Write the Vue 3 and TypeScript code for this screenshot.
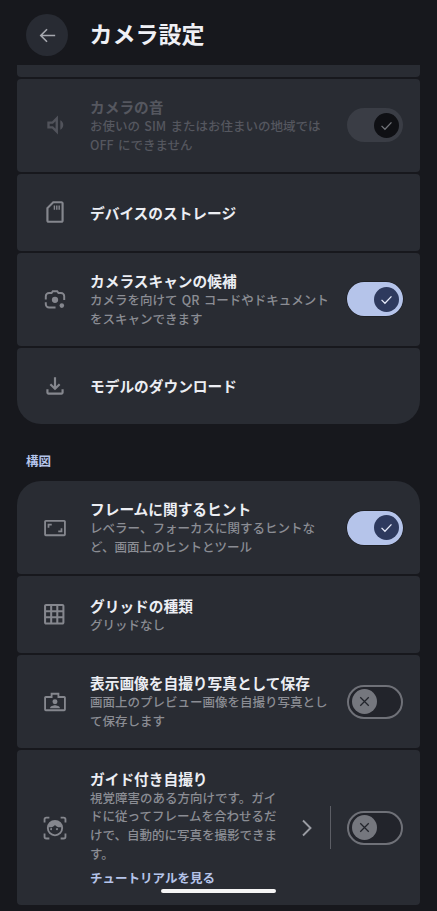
<script setup lang="ts">
interface Row {
  id: string
  title: string
  lines?: string[]
  icon: string
  toggle?: 'on' | 'off' | 'locked'
  extra?: string
  guided?: boolean
  disabled?: boolean
}

const firstGroup: Row[] = [
  { id: 'sound', title: 'カメラの音', lines: ['お使いの SIM またはお住まいの地域では', 'OFF にできません'], icon: 'sound', toggle: 'locked', disabled: true },
  { id: 'storage', title: 'デバイスのストレージ', icon: 'sd' },
  { id: 'scan', title: 'カメラスキャンの候補', lines: ['カメラを向けて QR コードやドキュメント', 'をスキャンできます'], icon: 'lens', toggle: 'on' },
  { id: 'model', title: 'モデルのダウンロード', icon: 'download' },
]

const secondGroup: Row[] = [
  { id: 'hint', title: 'フレームに関するヒント', lines: ['レベラー、フォーカスに関するヒントな', 'ど、画面上のヒントとツール'], icon: 'frame', toggle: 'on' },
  { id: 'grid', title: 'グリッドの種類', lines: ['グリッドなし'], icon: 'grid' },
  { id: 'selfie', title: '表示画像を自撮り写真として保存', lines: ['画面上のプレビュー画像を自撮り写真とし', 'て保存します'], icon: 'badge', toggle: 'off' },
  { id: 'guide', title: 'ガイド付き自撮り', lines: ['視覚障害のある方向けです。ガイ', 'ドに従ってフレームを合わせるだ', 'けで、自動的に写真を撮影できま', 'す。'], icon: 'face', toggle: 'off', extra: 'チュートリアルを見る', guided: true },
]

const groups = [
  { id: 'a', label: '', rows: firstGroup },
  { id: 'b', label: '構図', rows: secondGroup },
]

const viewBoxes: Record<string, string> = {
  sound: '0.5 1 22 22',
  grid: '0 0 25.500 25.500',
}
function viewBoxFor(icon: string): string {
  return viewBoxes[icon] ?? '0 0 24 24'
}
</script>

<template>
  <div class="screen">
    <header class="top">
      <button class="back" aria-label="戻る">
        <svg viewBox="0 0 24 24" class="back-icon"><path d="M20 12H5M11.500 5.500 5 12l6.500 6.500" /></svg>
      </button>
      <h1>カメラ設定</h1>
    </header>

    <main class="scroll">
      <div class="stub"></div>
      <template v-for="g in groups" :key="g.id">
        <h2 v-if="g.label" class="section">{{ g.label }}</h2>
        <section class="group">
          <article
            v-for="r in g.rows"
            :key="r.id"
            class="row"
            :class="['row-' + r.id, { disabled: r.disabled }]"
          >
            <svg class="icon" :viewBox="viewBoxFor(r.icon)">
              <path v-if="r.icon === 'sound'" d="M16 7.970v8.050c1.480-.73 2.500-2.250 2.500-4.020A4.500 4.500 0 0 0 16 7.970zM5 9v6h4l5 5V4L9 9H5zm7-.17v6.340L9.830 13H7v-2h2.830L12 8.830z" />
              <path v-else-if="r.icon === 'sd'" d="M18 2h-8L4 8v12c0 1.100.9 2 2 2h12c1.100 0 2-.9 2-2V4c0-1.100-.9-2-2-2zm0 18H6V8.830L10.830 4H18v16zM10.800 6h1.300v4h-1.300zM13 6h1.300v4H13zM15.200 6h1.300v4h-1.300z" />
              <template v-else-if="r.icon === 'lens'">
                <path class="line" d="M12.500 19.800H6.500a3 3 0 0 1-3-3V15M3.500 12.500V9.500a3 3 0 0 1 3-3h2.300l1.200-1.700h4l1.200 1.700h2.300a3 3 0 0 1 3 3V13" />
                <circle cx="12" cy="12.800" r="2.900" />
                <circle cx="18.300" cy="18.100" r="2.100" />
              </template>
              <path v-else-if="r.icon === 'download'" d="M18 15v3H6v-3H4v3c0 1.100.9 2 2 2h12c1.100 0 2-.9 2-2v-3h-2zm-1-4-1.410-1.410L13 12.170V4h-2v8.170L8.410 9.590 7 11l5 5 5-5z" />
              <path v-else-if="r.icon === 'frame'" d="M20.500 4.500h-17C2.700 4.500 2 5.200 2 6v12c0 .8.7 1.500 1.500 1.500h17c.8 0 1.500-.7 1.500-1.500V6c0-.8-.7-1.500-1.500-1.500zm-.2 13.300H3.700V6.200h16.600v11.600zM9 8H5.200v3.800h1.600V9.600H9V8zM18.800 12.200h-1.600v2.200H15V16h3.800v-3.800z" />
              <path v-else-if="r.icon === 'grid'" d="M20 2H4c-1.100 0-2 .9-2 2v16c0 1.100.9 2 2 2h16c1.100 0 2-.9 2-2V4c0-1.100-.9-2-2-2zM8 20H4v-4h4v4zm0-6H4v-4h4v4zm0-6H4V4h4v4zm6 12h-4v-4h4v4zm0-6h-4v-4h4v4zm0-6h-4V4h4v4zm6 12h-4v-4h4v4zm0-6h-4v-4h4v4zm0-6h-4V4h4v4z" />
              <path v-else-if="r.icon === 'badge'" d="M8 3.500h8V6.500h4.500c.8 0 1.500.7 1.500 1.500v11c0 .8-.7 1.500-1.500 1.500h-17c-.8 0-1.500-.7-1.500-1.500V8c0-.8.7-1.500 1.500-1.500H8V3.500zm1.700 1.700v3H3.700v10.600h16.600V8.200h-6V5.200H9.700zM12 9.500a2.300 2.300 0 1 1 0 4.600 2.300 2.300 0 0 1 0-4.600zM7.500 17.500c0-1.500 3-2.400 4.500-2.400s4.500.9 4.500 2.400v.3h-9v-.3z" />
              <template v-else-if="r.icon === 'face'">
                <path d="M1.500 7V4a2.500 2.500 0 0 1 2.500-2.500h2.800v1.700H4c-.5 0-.8.3-.8.8v3H1.500zM17.200 1.500H20A2.500 2.500 0 0 1 22.500 4v3h-1.700V4c0-.5-.3-.8-.8-.8h-2.800V1.500zM1.500 17h1.700v3c0 .5.3.8.8.8h2.800v1.700H4A2.500 2.500 0 0 1 1.500 20v-3zM20.800 17h1.700v3a2.500 2.500 0 0 1-2.500 2.500h-2.800v-1.700H20c.5 0 .8-.3.8-.8v-3z" />
                <path fill-rule="evenodd" d="M12 4.500a7.500 7.500 0 1 1 0 15 7.500 7.500 0 0 1 0-15zM6.300 11.200c2.300.4 4.300-.2 5.700-2 1.400 1.800 3.400 2.400 5.700 2v1a5.700 5.700 0 0 1-11.400 0v-1zM9.300 13a.9.9 0 1 0 0 .01zM14.700 13a.9.9 0 1 0 0 .01z" />
              </template>
            </svg>

            <div class="text" :class="{ narrow: r.guided }">
              <div class="title">{{ r.title }}</div>
              <div v-for="l in r.lines" :key="l" class="sub">{{ l }}</div>
              <div v-if="r.extra" class="link">{{ r.extra }}</div>
            </div>

            <div class="end">
              <template v-if="r.guided">
                <svg class="chevron" viewBox="0 0 24 24"><path d="M8 4.500 15.500 12 8 19.500" /></svg>
                <span class="divider"></span>
              </template>
              <div v-if="r.toggle" class="toggle" :class="r.toggle">
                <span class="thumb">
                  <svg v-if="r.toggle === 'off'" viewBox="0 0 24 24"><path d="M6 6l12 12M18 6 6 18" /></svg>
                  <svg v-else viewBox="0 0 24 24"><path d="M5 12.500l4.800 4.800L19 7.500" /></svg>
                </span>
              </div>
            </div>
          </article>
        </section>
      </template>
    </main>

    <div class="home"></div>
  </div>
</template>

<style scoped>
.screen {
  position: relative;
  width: 437px;
  height: 911px;
  overflow: hidden;
  background: #17181d;
  font-family: "Noto Sans CJK JP", "Noto Sans", sans-serif;
  color: #eceef3;
}
.top {
  height: 65px;
  box-sizing: border-box;
  display: flex;
  align-items: center;
  padding: 5px 0 0 26px;
  gap: 21.500px;
}
.back {
  width: 42px;
  height: 42px;
  padding: 0;
  border: 0;
  border-radius: 50%;
  background: #282b33;
  display: flex;
  align-items: center;
  justify-content: center;
}
.back-icon {
  width: 23px;
  height: 23px;
  fill: none;
  stroke: #a6a8af;
  stroke-width: 1.700;
}
h1 {
  margin: 0 0 4px;
  font-size: 23px;
  line-height: 32px;
  font-weight: 700;
  color: #eff0f5;
}
.scroll {
  padding: 0 17px;
}
.stub {
  height: 12px;
  margin-bottom: 2px;
  background: #292c33;
  border-radius: 0 0 4px 4px;
}
.section {
  margin: 0;
  height: 57px;
  box-sizing: border-box;
  padding: 28px 0 0 9px;
  font-size: 12.500px;
  line-height: 18px;
  font-weight: 700;
  color: #b5c4ea;
}
.group {
  display: flex;
  flex-direction: column;
  gap: 2px;
}
.row {
  display: flex;
  align-items: center;
  box-sizing: border-box;
  min-height: 77px;
  padding: 0 17px 0 25px;
  background: #292c33;
  border-radius: 4px;
}
.row-sound {
  min-height: 92.500px;
}
.row-scan, .row-hint, .row-selfie {
  min-height: 93px;
}
.row-model {
  min-height: 76.500px;
  border-radius: 4px 4px 24px 24px;
}
.row-guide {
  min-height: 155px;
}
.row-hint {
  border-radius: 24px 24px 4px 4px;
}
.icon {
  flex: none;
  width: 26px;
  height: 26px;
  margin-right: 22px;
  fill: #85878e;
}
.icon .line {
  fill: none;
  stroke: #85878e;
  stroke-width: 1.800;
}
.disabled .icon {
  fill: #51535b;
}
.text {
  width: 240px;
  flex: none;
}
.text.narrow {
  width: 190px;
}
.title {
  font-size: 14.700px;
  line-height: 21px;
  font-weight: 700;
  white-space: nowrap;
  color: #eceef3;
}
.sub {
  font-size: 12.500px;
  line-height: 18.700px;
  font-weight: 500;
  word-spacing: 1.500px;
  white-space: nowrap;
  color: #8b8d94;
}
.link {
  margin-top: 6px;
  font-size: 12.500px;
  line-height: 18px;
  font-weight: 700;
  color: #b5c4ea;
}
.disabled .title,
.disabled .sub {
  color: #55575f;
}
.end {
  margin-left: auto;
  display: flex;
  align-items: center;
}
.chevron {
  width: 24px;
  height: 24px;
  fill: none;
  stroke: #9a9ca3;
  stroke-width: 1.900;
  margin-right: 11px;
}
.divider {
  width: 1.500px;
  height: 43px;
  background: #5c5e65;
  margin-right: 16px;
}
.toggle {
  width: 56px;
  height: 34px;
  box-sizing: border-box;
  border-radius: 17px;
  display: flex;
  align-items: center;
}
.toggle.on {
  background: #b5c4ea;
  box-shadow: 0 0 0 .5px #16171b;
  justify-content: flex-end;
  padding-right: 4px;
}
.toggle.locked {
  background: #3a3d45;
  justify-content: flex-end;
  padding-right: 4px;
}
.toggle.off {
  background: #22242b;
  border: 2.500px solid #6f7178;
  padding-left: 2.500px;
}
.thumb {
  width: 25px;
  height: 25px;
  border-radius: 50%;
  display: flex;
  align-items: center;
  justify-content: center;
}
.thumb svg {
  width: 17px;
  height: 17px;
  fill: none;
  stroke-width: 1.800;
}
.on .thumb {
  background: #2e3a5e;
}
.on .thumb svg {
  stroke: #e6ebfa;
}
.locked .thumb {
  background: #0f1014;
}
.locked .thumb svg {
  stroke: #72747a;
}
.off .thumb {
  background: #75777e;
}
.off .thumb svg {
  stroke: #22242b;
}
.home {
  position: absolute;
  left: 161px;
  top: 889px;
  width: 115px;
  height: 4px;
  border-radius: 2px;
  background: #f5f5f5;
}
</style>

<style>
html, body {
  margin: 0;
  background: #17181d;
}
</style>
